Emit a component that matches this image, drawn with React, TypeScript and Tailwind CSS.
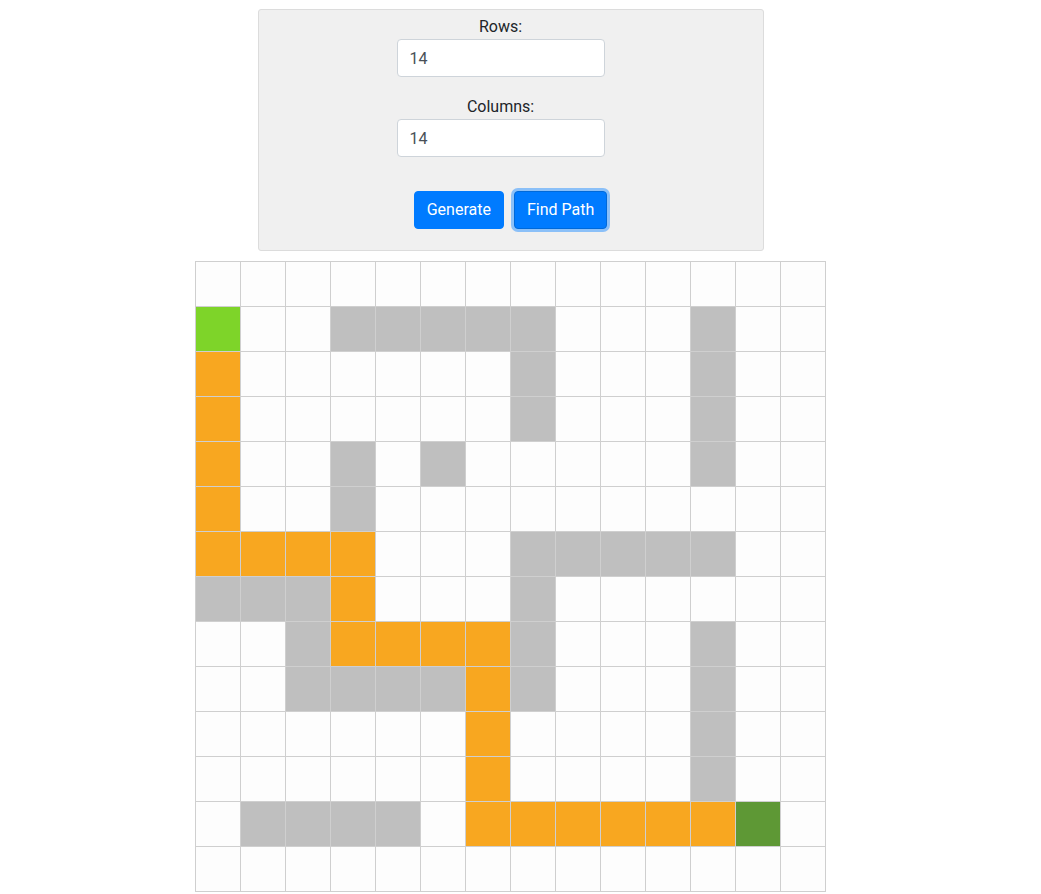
import React from 'react';

// 0 empty, 1 wall, 2 path, 3 start, 4 end
const grid: number[][] = [
  [0, 0, 0, 0, 0, 0, 0, 0, 0, 0, 0, 0, 0, 0],
  [3, 0, 0, 1, 1, 1, 1, 1, 0, 0, 0, 1, 0, 0],
  [2, 0, 0, 0, 0, 0, 0, 1, 0, 0, 0, 1, 0, 0],
  [2, 0, 0, 0, 0, 0, 0, 1, 0, 0, 0, 1, 0, 0],
  [2, 0, 0, 1, 0, 1, 0, 0, 0, 0, 0, 1, 0, 0],
  [2, 0, 0, 1, 0, 0, 0, 0, 0, 0, 0, 0, 0, 0],
  [2, 2, 2, 2, 0, 0, 0, 1, 1, 1, 1, 1, 0, 0],
  [1, 1, 1, 2, 0, 0, 0, 1, 0, 0, 0, 0, 0, 0],
  [0, 0, 1, 2, 2, 2, 2, 1, 0, 0, 0, 1, 0, 0],
  [0, 0, 1, 1, 1, 1, 2, 1, 0, 0, 0, 1, 0, 0],
  [0, 0, 0, 0, 0, 0, 2, 0, 0, 0, 0, 1, 0, 0],
  [0, 0, 0, 0, 0, 0, 2, 0, 0, 0, 0, 1, 0, 0],
  [0, 1, 1, 1, 1, 0, 2, 2, 2, 2, 2, 2, 4, 0],
  [0, 0, 0, 0, 0, 0, 0, 0, 0, 0, 0, 0, 0, 0],
];

const cellColor: Record<number, string> = {
  0: 'bg-[#fdfdfd]',
  1: 'bg-[#bfbfbf]',
  2: 'bg-[#f8a720]',
  3: 'bg-[#7ed429]',
  4: 'bg-[#5e9835]',
};

function Field({ label, value, className }: { label: string; value: string; className?: string }) {
  return (
    <div className={`flex flex-col items-center ${className ?? ''}`}>
      <label className="text-[16px] leading-[24px] text-[#212529]">{label}</label>
      <input
        readOnly
        value={value}
        className="w-[208px] h-[38px] border border-[#ced4da] rounded-[4px] bg-white px-[12px] text-[16px] text-[#495057] outline-none"
      />
    </div>
  );
}

export default function App() {
  return (
    <div className="w-[1021px] flex flex-col items-center bg-white font-['Roboto',sans-serif]">
      <div className="mt-[9px] w-[506px] border border-[#dcdcdc] rounded-[3px] bg-[#f0f0f0] pt-[5px] pb-[21px] flex flex-col items-center">
        <div className="flex flex-col items-center pr-[20px]">
          <Field label="Rows:" value="14" />
          <Field label="Columns:" value="14" className="mt-[18px]" />
        </div>
        <div className="mt-[34px] flex gap-[10px]">
          <button className="h-[38px] px-[12px] rounded-[4px] border border-[#007bff] bg-[#007bff] text-white text-[16px]">
            Generate
          </button>
          <button className="h-[38px] px-[12px] rounded-[4px] border border-[#0069d9] bg-[#007bff] text-white text-[16px] shadow-[0_0_0_3px_rgba(38,143,255,0.5)]">
            Find Path
          </button>
        </div>
      </div>

      <div className="mt-[10px] border-l border-t border-[#cfcfcf]">
        {grid.map((row, r) => (
          <div key={r} className="flex">
            {row.map((v, c) => (
              <div key={c} className={`w-[45px] h-[45px] border-r border-b border-[#cfcfcf] ${cellColor[v]}`} />
            ))}
          </div>
        ))}
      </div>
    </div>
  );
}
